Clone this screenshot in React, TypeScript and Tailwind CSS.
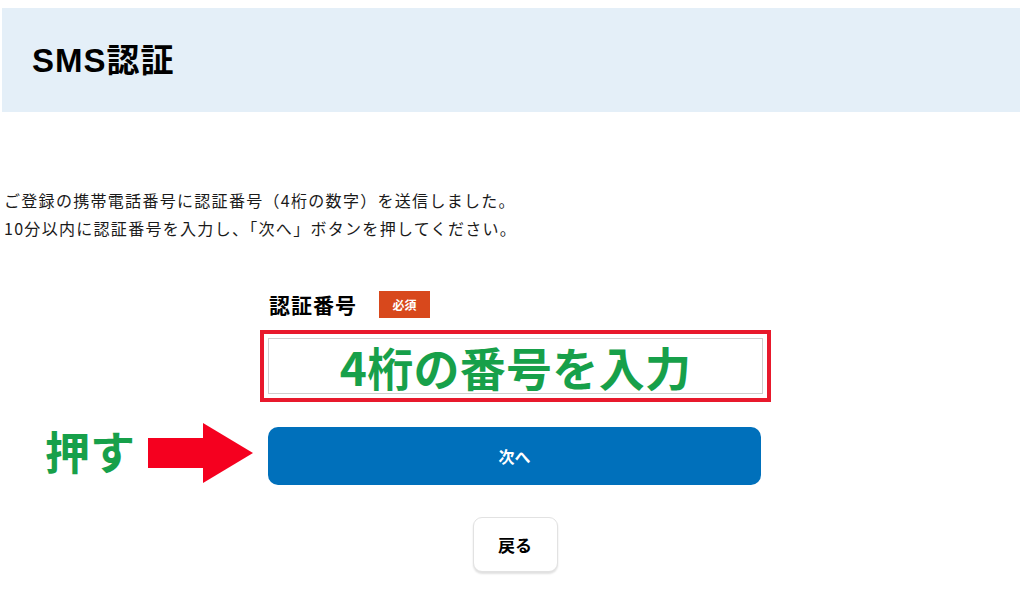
import React from "react";

const JP = "font-['Noto_Sans_CJK_JP',sans-serif]";

function Arrow() {
  return (
    <svg width="105" height="60" viewBox="0 0 105 60" className="shrink-0">
      <rect x="0" y="15" width="56" height="30" fill="#f5001f" />
      <polygon points="55,0 105,30 55,60" fill="#f5001f" />
    </svg>
  );
}

export default function App() {
  return (
    <div className={`min-h-[610px] bg-white pt-[8px] text-[#111] ${JP}`}>
      {/* Header band */}
      <div className="ml-[2px] flex h-[104px] items-center bg-[#e4eff8] pl-[30px]">
        <h1 className="font-['Liberation_Sans','Noto_Sans_CJK_JP',sans-serif] text-[33px] font-bold leading-none tracking-[1px] text-black">
          SMS認証
        </h1>
      </div>

      {/* Intro text */}
      <p className="mt-[74px] pl-[4px] text-[16px] leading-[28px] tracking-[1.3px] text-[#1a1a1a]">
        ご登録の携帯電話番号に認証番号（4桁の数字）を送信しました。
        <br />
        10分以内に認証番号を入力し、「次へ」ボタンを押してください。
      </p>

      {/* Form */}
      <div className="mt-[49px] grid grid-cols-[268px_494px]">
        {/* Label row */}
        <div />
        <div className="flex h-[27px] items-center">
          <span className="pl-[1px] text-[21px] font-bold leading-none tracking-[1px] text-black">認証番号</span>
          <span className="ml-[22px] flex h-[27px] w-[51px] items-center justify-center bg-[#d8481c] text-[12px] font-bold leading-none text-white">
            必須
          </span>
        </div>

        {/* Input row */}
        <div />
        <div className="mt-[12px] -ml-[8px] h-[72px] w-[511px] border-[4px] border-[#e8192c] p-[4px]">
          <div className="flex h-full w-full items-center justify-center border border-[#cfcfcf] bg-white">
            <span className="text-[46px] font-bold leading-none tracking-[0.3px] text-[#17a04a]">4桁の番号を入力</span>
          </div>
        </div>

        {/* Next row with annotation */}
        <div className="mt-[21px] flex items-start pl-[45px]">
          <span className="mt-[5px] text-[45px] font-bold leading-none text-[#17a04a]">押す</span>
          <div className="ml-[13px]">
            <Arrow />
          </div>
        </div>
        <div className="mt-[21px]">
          <button className="mt-[4px] flex h-[58px] w-[493px] items-center justify-center rounded-[10px] bg-[#0070bb] text-[16px] font-bold text-white">
            次へ
          </button>
        </div>

        {/* Back row */}
        <div />
        <div className="mt-[32px] flex justify-center">
          <button className="flex h-[55px] w-[85px] items-center justify-center rounded-[9px] border border-[#e2e2e2] bg-white text-[17px] font-bold text-black shadow-[0_2px_2px_rgba(0,0,0,0.12)]">
            戻る
          </button>
        </div>
      </div>
    </div>
  );
}
